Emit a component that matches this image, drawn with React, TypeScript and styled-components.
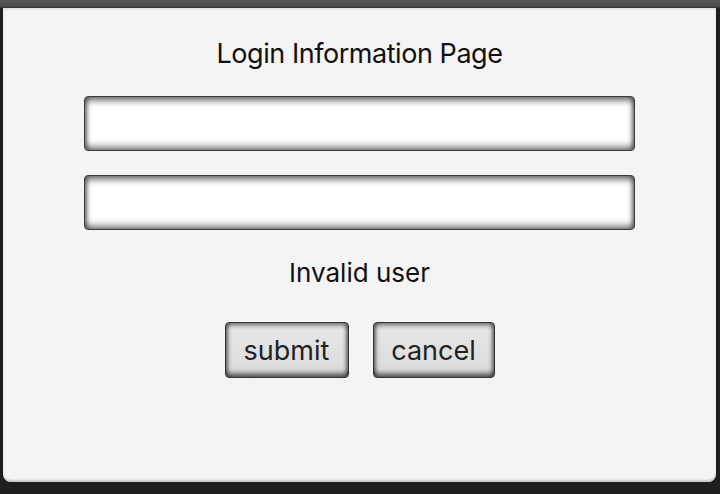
import styled, { createGlobalStyle } from "styled-components";

const GlobalStyle = createGlobalStyle`
  html, body {
    margin: 0;
    padding: 0;
    width: 720px;
    height: 494px;
    overflow: hidden;
    background: #1c1c1c;
    font-family: Inter, "Liberation Sans", Arial, sans-serif;
  }
`;

const Screen = styled.div`
  width: 720px;
  height: 494px;
  background: linear-gradient(to bottom, #555 0px, #4e4e4e 6px, #2a2a2a 8px, #1e1e1e 9px, #1e1e1e 100%);
  padding: 8px 4px 0 3px;
  box-sizing: border-box;
`;

const Panel = styled.div`
  height: 474px;
  background: #f4f4f4;
  border-radius: 0 0 8px 8px;
  box-shadow: inset 0 -3px 2px -1px #c8c8c8, inset 0 2px 3px -1px #d8d8d8;
  display: flex;
  flex-direction: column;
  align-items: center;
  box-sizing: border-box;
  padding-top: 28px;
`;

const Title = styled.h1`
  margin: 0;
  font-size: 27px;
  font-weight: 400;
  letter-spacing: -0.45px;
  color: #111;
  line-height: 36px;
`;

const Field = styled.input<{ $top: number }>`
  width: 551px;
  height: 55px;
  box-sizing: border-box;
  margin-top: ${({ $top }) => $top}px;
  background: #fff;
  border: 1.5px solid #3c3c3c;
  border-radius: 4px;
  box-shadow: inset 0 5px 6px -1px rgba(0, 0, 0, 0.5), inset 0 -5px 6px -1px rgba(0, 0, 0, 0.45),
    inset 4px 0 5px -2px rgba(0, 0, 0, 0.35), inset -4px 0 5px -2px rgba(0, 0, 0, 0.35);
  outline: none;
  font-size: 24px;
  padding: 0 12px;
`;

const Message = styled.p`
  margin: 26px 0 0;
  font-size: 26px;
  color: #111;
  line-height: 34px;
`;

const ButtonRow = styled.div`
  display: flex;
  gap: 24px;
  margin-top: 32px;
`;

const ActionButton = styled.button<{ $w: number }>`
  width: ${({ $w }) => $w}px;
  height: 56px;
  box-sizing: border-box;
  border: 1.5px solid #333;
  border-radius: 4px;
  background: linear-gradient(to bottom, #e8e8e8, #dadada);
  box-shadow: inset 0 4px 4px -1px rgba(0, 0, 0, 0.4), inset 0 -5px 5px -1px rgba(0, 0, 0, 0.55),
    inset 4px 0 4px -2px rgba(0, 0, 0, 0.4), inset -4px 0 4px -2px rgba(0, 0, 0, 0.4);
  font-family: inherit;
  font-size: 27px;
  color: #222;
  padding: 0;
  cursor: pointer;
`;

export default function App() {
  return (
    <>
      <GlobalStyle />
      <Screen>
        <Panel>
          <Title>Login Information Page</Title>
          <Field $top={24} type="text" />
          <Field $top={24} type="password" />
          <Message>Invalid user</Message>
          <ButtonRow>
            <ActionButton $w={124}>submit</ActionButton>
            <ActionButton $w={122}>cancel</ActionButton>
          </ButtonRow>
        </Panel>
      </Screen>
    </>
  );
}
